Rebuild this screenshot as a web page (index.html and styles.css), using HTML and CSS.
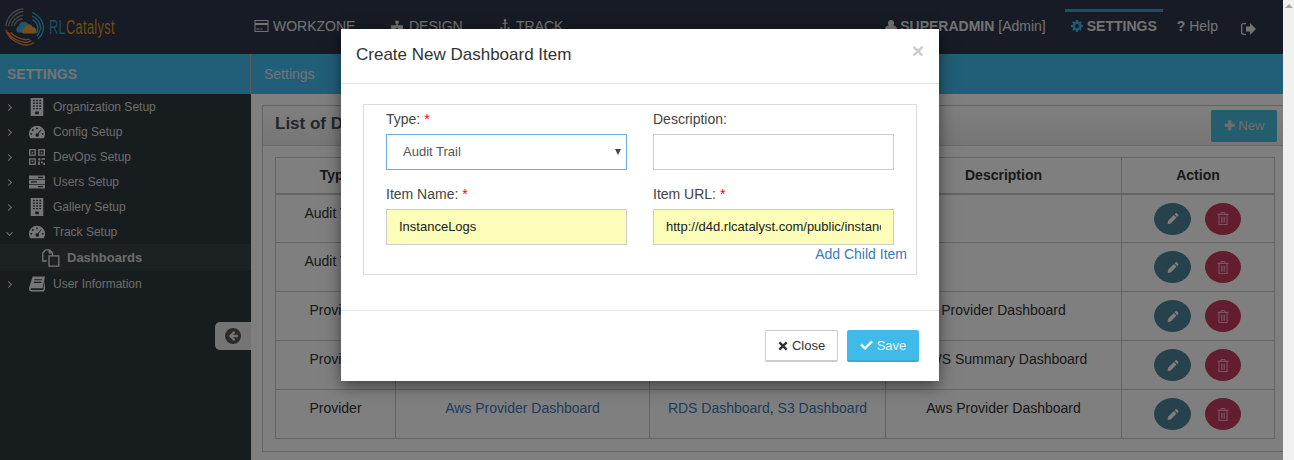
FILE: index.html
```html
<!DOCTYPE html>
<html lang="en">

<head>
    <meta charset="UTF-8">
    <title>RLCatalyst</title>
    <link rel="stylesheet" href="styles.css">
</head>

<body>
    <svg class="defs" width="0" height="0">
        <symbol id="i-building" viewBox="0 0 16 20">
            <path fill="currentColor" fill-rule="evenodd" d="M1 0h14v20H1zM3.500 2v1.600h2V2zm3.500 0v1.600h2V2zm3.500 0v1.600h2V2zM3.500 5v1.600h2V5zM7 5v1.600h2V5zm3.500 0v1.600h2V5zM3.500 8v1.600h2V8zM7 8v1.600h2V8zm3.500 0v1.600h2V8zM3.500 11v1.600h2V11zM7 11v1.600h2V11zm3.500 0v1.600h2V11zM6 15v3h4v-3z" />
        </symbol>
        <symbol id="i-gauge" viewBox="0 0 18 14">
            <path fill="currentColor" fill-rule="evenodd" d="M9 0a9 9 0 0 1 9 9c0 2-.6 3.600-1.600 5H1.600C.6 12.600 0 11 0 9a9 9 0 0 1 9-9zM9 1.800a1.100 1.100 0 1 0 0 2.200 1.100 1.100 0 0 0 0-2.200zM4.300 3.700a1.100 1.100 0 1 0 0 2.200 1.100 1.100 0 0 0 0-2.200zM2.600 8a1.100 1.100 0 1 0 0 2.200 1.100 1.100 0 0 0 0-2.200zM15.400 8a1.100 1.100 0 1 0 0 2.200 1.100 1.100 0 0 0 0-2.200zM13.500 3.800L9.700 8.600a1.900 1.900 0 1 0 1 .7l3.600-5z" />
        </symbol>
        <symbol id="i-qr" viewBox="0 0 14 14">
            <path fill="currentColor" fill-rule="evenodd" d="M0 0h6v6H0zm1.200 1.200v3.600h3.600V1.200zM8 0h6v6H8zm1.200 1.200v3.600h3.600V1.200zM0 8h6v6H0zm1.200 1.200v3.600h3.600V9.200zM2.300 2.300h1.400v1.400H2.300zm8 0h1.400v1.400h-1.400zm-8 8h1.400v1.400H2.300zM8 8h2v2H8zm3 0h3v1.500h-3zM8 11h1.500v3H8zm2.500 0H12v1.500h-1.500zm2 1H14v2h-1.500z" />
        </symbol>
        <symbol id="i-server" viewBox="0 0 16 13">
            <path fill="currentColor" fill-rule="evenodd" d="M0 0h16v3.800H0zm9 1.200v1.300h5V1.200zM0 4.600h16v3.800H0zm2 1.200v1.300h6V5.800zM0 9.200h16V13H0zm9 1.200v1.300h5v-1.300z" />
        </symbol>
        <symbol id="i-book" viewBox="0 0 15 14">
            <path fill="currentColor" fill-rule="evenodd" d="M3.500 0H15l-2.200 11H2.500c-.8 0-1 .4-1 .8s.3.800 1 .8h10.800L15 4.500V12l-1 2H2.200C.9 14 0 13 0 11.700 0 11 .2 10 .4 9.300zM5 2.600v1h7v-1zM4.600 5v1h7V5z" />
        </symbol>
        <symbol id="i-files" viewBox="0 0 18 18">
            <path fill="none" stroke="currentColor" stroke-width="1.300" d="M3.500.8h4l3 3v3M3.500.8L.8 4v8h4M7 6.800h5l4.800 0v10.400H7zM7.300.8v3h3" />
        </symbol>
        <symbol id="i-pencil" viewBox="0 0 12 12">
            <path fill="currentColor" d="M8.600.8a.8.800 0 0 1 1.100 0l1.500 1.500a.8.800 0 0 1 0 1.100l-1 1L7.600 1.800zM6.900 2.500l2.600 2.600-5.800 5.800L.6 11.400l.5-3.100z" />
        </symbol>
        <symbol id="i-trash" viewBox="0 0 12 14">
            <path fill="currentColor" fill-rule="evenodd" d="M4 0h4l1 2h3v1.200h-1V14H1V3.200H0V2h3zm.6 1L4.200 2h3.600l-.4-1zM2.200 3.200v9.600h7.600V3.200zM3.800 5h1v6.500h-1zm1.700 0h1v6.500h-1zm1.700 0h1v6.500h-1z" />
        </symbol>
    </svg>

    <div class="page">
        <div class="app">
            <header class="topbar">
                <div class="logo">
                    <svg class="logo-mark" viewBox="0 0 46 42" width="42" height="40">
                        <g fill="none" stroke-width="1.500">
                            <path stroke="#8a8a8a" d="M1 20C2 10 10 2 20 1M4 20C5 12 12 5 20 4M7 20c1-6 6-11 13-12M10 20c1-4 4-7 9-8" />
                            <path stroke="#3fa9d8" d="M30 5c8 4 13 11 12 19-1 4-3 8-6 10M30 9c6 3 9 8 9 14-1 3-2 6-4 8M30 13c4 2 6 6 6 10 0 2-1 4-2 5" />
                            <path stroke="#e8873a" d="M1 24c2 8 10 15 22 17 3 0 6-1 9-3M3 27c4 6 11 10 20 11 2 0 4-1 6-2M6 27c4 4 10 7 17 8 1 0 3 0 4-1" />
                        </g>
                        <path fill="#3fa9d8" d="M14 27a4 4 0 0 1 1-7 6 6 0 0 1 11-2 5 5 0 0 1 3 9z" />
                        <path fill="#e8a03a" d="M20 28a3.500 3.500 0 0 1 1-6 5 5 0 0 1 9-1 4 4 0 0 1 3 7z" />
                    </svg>
                    <span class="logo-text"><span class="logo-rl">RL</span>Catalyst</span>
                </div>
                <nav class="nav-main">
                    <a class="nav-link nav-workzone">
                        <svg class="nav-icon" viewBox="0 0 14 12" width="15" height="12"><path fill="currentColor" fill-rule="evenodd" d="M0 0h14v12H0zm1 1v2h12V1zm0 4v6h12V5zm1 3.500h3v1H2zm4 0h2v1H6z" /></svg>
                        <span>WORKZONE</span>
                    </a>
                    <a class="nav-link nav-design">
                        <svg class="nav-icon" viewBox="0 0 14 12" width="12" height="12"><path fill="currentColor" d="M5 0h4v3H8v2h6v7H8V8H6v4H0V5h6V3H5z" /></svg>
                        <span>DESIGN</span>
                    </a>
                    <a class="nav-link nav-track">
                        <svg class="nav-icon" viewBox="0 0 10 14" width="10" height="13"><path fill="currentColor" d="M5 0a1.500 1.500 0 0 1 .7 2.800V4H8v1.200H5.700v6.300c1.200-.2 2-.8 2.500-1.500L7 9.500 10 8.500V12L9 11c-.8 1.500-2.300 3-4 3s-3.200-1.500-4-3l-1 1V8.500l3 1-1.200.5c.5.700 1.300 1.300 2.500 1.500V5.200H2V4h2.300V2.800A1.500 1.500 0 0 1 5 0z" /></svg>
                        <span>TRACK</span>
                    </a>
                </nav>
                <div class="nav-user">
                    <a class="nav-link nav-admin">
                        <svg class="nav-icon" viewBox="0 0 12 12" width="12" height="12"><path fill="currentColor" d="M6 0a3 3 0 0 1 2 5.300c2 .4 4 1.400 4 3.700v3H0V9c0-2.300 2-3.300 4-3.700A3 3 0 0 1 6 0z" /></svg>
                        <span><b>SUPERADMIN</b> [Admin]</span>
                    </a>
                    <a class="nav-link nav-settings">
                        <svg class="nav-gear" viewBox="0 0 12 12" width="12" height="12"><path fill="currentColor" fill-rule="evenodd" d="M5 0h2l.3 1.600 1.100.5L9.800 1.200l1 1-.9 1.400.5 1.100L12 5v2l-1.600.3-.5 1.100.9 1.400-1 1-1.400-.9-1.100.5L7 12H5l-.3-1.600-1.100-.5-1.400.9-1-1 .9-1.400-.5-1.100L0 7V5l1.600-.3.5-1.100-.9-1.400 1-1 1.400.9 1.100-.5zM6 4a2 2 0 1 0 0 4 2 2 0 0 0 0-4z" /></svg>
                        <b>SETTINGS</b>
                    </a>
                    <a class="nav-link nav-help"><span><b>?</b> Help</span></a>
                    <a class="nav-link nav-out">
                        <svg viewBox="0 0 15 12" width="15" height="12"><path fill="currentColor" d="M9 0l6 6-6 6V8.500H5v-5h4zM0 2.500A2.500 2.500 0 0 1 2.500 0H5v1.300H2.500c-.7 0-1.200.5-1.200 1.200v7c0 .7.500 1.200 1.200 1.200H5V12H2.500A2.500 2.500 0 0 1 0 9.500z" /></svg>
                    </a>
                </div>
            </header>

            <div class="subbar">
                <div class="subbar-title">SETTINGS</div>
                <div class="subbar-crumb">Settings</div>
            </div>

            <div class="main">
                <aside class="sidebar">
                    <ul class="side-menu">
                        <li class="side-item"><span class="chev"></span><svg class="side-icon side-tall"><use href="#i-building" /></svg>Organization Setup</li>
                        <li class="side-item"><span class="chev"></span><svg class="side-icon"><use href="#i-gauge" /></svg>Config Setup</li>
                        <li class="side-item"><span class="chev"></span><svg class="side-icon"><use href="#i-qr" /></svg>DevOps Setup</li>
                        <li class="side-item"><span class="chev"></span><svg class="side-icon"><use href="#i-server" /></svg>Users Setup</li>
                        <li class="side-item"><span class="chev"></span><svg class="side-icon side-tall"><use href="#i-building" /></svg>Gallery Setup</li>
                        <li class="side-item"><span class="chev chev-open"></span><svg class="side-icon"><use href="#i-gauge" /></svg>Track Setup</li>
                        <li class="side-sub"><svg class="sub-icon"><use href="#i-files" /></svg>Dashboards</li>
                        <li class="side-item"><span class="chev"></span><svg class="side-icon"><use href="#i-book" /></svg>User Information</li>
                    </ul>
                    <div class="side-toggle">
                        <svg viewBox="0 0 16 16" width="16" height="16"><path fill="currentColor" fill-rule="evenodd" d="M8 0a8 8 0 1 1 0 16A8 8 0 0 1 8 0zm.8 3L3.800 8l5 5 1.600-1.600L8.200 9.200H13V6.800H8.200l2.200-2.200z" /></svg>
                    </div>
                </aside>

                <section class="content">
                    <div class="panel">
                        <div class="panel-head">
                            <h2 class="panel-title">List of Dashboard Items</h2>
                            <a class="btn-new"><b>&#10010;</b> New</a>
                        </div>
                        <div class="panel-body">
                            <table class="grid">
                                <colgroup>
                                    <col class="col-type">
                                    <col class="col-item">
                                    <col class="col-child">
                                    <col class="col-desc">
                                    <col class="col-action">
                                </colgroup>
                                <thead>
                                    <tr>
                                        <th>Type</th>
                                        <th>Item Name</th>
                                        <th>Child Items</th>
                                        <th>Description</th>
                                        <th>Action</th>
                                    </tr>
                                </thead>
                                <tbody>
                                    <tr>
                                        <td>Audit Trail</td>
                                        <td><a>InstanceLogs</a></td>
                                        <td></td>
                                        <td></td>
                                        <td class="actions"><a class="act act-edit"><svg><use href="#i-pencil" /></svg></a><a class="act act-del"><svg><use href="#i-trash" /></svg></a></td>
                                    </tr>
                                    <tr>
                                        <td>Audit Trail</td>
                                        <td><a>Audit Logs</a></td>
                                        <td></td>
                                        <td></td>
                                        <td class="actions"><a class="act act-edit"><svg><use href="#i-pencil" /></svg></a><a class="act act-del"><svg><use href="#i-trash" /></svg></a></td>
                                    </tr>
                                    <tr>
                                        <td>Provider</td>
                                        <td><a>Azure Provider Dashboard</a></td>
                                        <td></td>
                                        <td>Provider Dashboard</td>
                                        <td class="actions"><a class="act act-edit"><svg><use href="#i-pencil" /></svg></a><a class="act act-del"><svg><use href="#i-trash" /></svg></a></td>
                                    </tr>
                                    <tr>
                                        <td>Provider</td>
                                        <td><a>AWS Summary Dashboard</a></td>
                                        <td></td>
                                        <td>AWS Summary Dashboard</td>
                                        <td class="actions"><a class="act act-edit"><svg><use href="#i-pencil" /></svg></a><a class="act act-del"><svg><use href="#i-trash" /></svg></a></td>
                                    </tr>
                                    <tr>
                                        <td>Provider</td>
                                        <td><a>Aws Provider Dashboard</a></td>
                                        <td><a>RDS Dashboard</a>, <a>S3 Dashboard</a></td>
                                        <td>Aws Provider Dashboard</td>
                                        <td class="actions"><a class="act act-edit"><svg><use href="#i-pencil" /></svg></a><a class="act act-del"><svg><use href="#i-trash" /></svg></a></td>
                                    </tr>
                                </tbody>
                            </table>
                        </div>
                    </div>
                </section>
            </div>

            <div class="overlay">
                <div class="modal">
                    <div class="modal-head">
                        <h3 class="modal-title">Create New Dashboard Item</h3>
                        <span class="modal-x">&times;</span>
                    </div>
                    <div class="modal-body">
                        <div class="form-box">
                            <div class="form-grid">
                                <div class="field">
                                    <label>Type: <span class="req">*</span></label>
                                    <div class="select-wrap">
                                        <select class="ctl ctl-focus">
                                            <option>Audit Trail</option>
                                        </select>
                                    </div>
                                </div>
                                <div class="field">
                                    <label>Description:</label>
                                    <input class="ctl" type="text">
                                </div>
                                <div class="field">
                                    <label>Item Name: <span class="req">*</span></label>
                                    <input class="ctl ctl-fill" type="text" value="InstanceLogs">
                                </div>
                                <div class="field">
                                    <label>Item URL: <span class="req">*</span></label>
                                    <input class="ctl ctl-fill" type="text" value="http://d4d.rlcatalyst.com/public/instanceLogs.html">
                                </div>
                            </div>
                            <a class="add-child">Add Child Item</a>
                        </div>
                    </div>
                    <div class="modal-foot">
                        <a class="btn btn-close"><svg viewBox="0 0 10 10" width="10" height="10"><path fill="currentColor" d="M2.200.5L5 3.300 7.800.5l1.700 1.700L6.700 5l2.800 2.800-1.700 1.700L5 6.700 2.200 9.500.5 7.800 3.300 5 .5 2.200z" /></svg>Close</a>
                        <a class="btn btn-save"><svg viewBox="0 0 13 10" width="13" height="10"><path fill="currentColor" d="M1.800 3.500L5 6.700 11.200.5 13 2.300 5 10 0 5.300z" /></svg>Save</a>
                    </div>
                </div>
            </div>
        </div>

        <div class="scrollbar"><span class="scroll-up"></span></div>
    </div>
</body>

</html>
```

FILE: styles.css
```css
* {
    margin: 0;
    padding: 0;
    box-sizing: border-box;
}

html,
body {
    height: 460px;
    overflow: hidden;
}

body {
    font-family: "Liberation Sans", Arial, sans-serif;
    font-size: 14px;
    color: #333;
}

.defs {
    display: block;
    height: 0;
}

.page {
    display: flex;
    height: 460px;
}

.app {
    position: relative;
    width: 1283px;
    height: 460px;
    overflow: hidden;
    background: #fff;
}

.scrollbar {
    width: 11px;
    background: #f1f1f1;
}

.scroll-up {
    display: block;
    margin: 4px auto 0;
    width: 0;
    border-left: 4px solid transparent;
    border-right: 4px solid transparent;
    border-bottom: 4px solid #a8a8a8;
}

/* top bar */
.topbar {
    display: flex;
    height: 54px;
    background: #2c364a;
    color: #e6e6e6;
}

.logo {
    display: flex;
    align-items: center;
    width: 251px;
    padding-left: 5px;
}

.logo-text {
    display: inline-block;
    margin-left: 2px;
    font-size: 20px;
    letter-spacing: .5px;
    color: #df9a2a;
    transform: scaleX(.64);
    transform-origin: left center;
}

.logo-rl {
    color: #3a9cc4;
}

.nav-link {
    display: flex;
    align-items: center;
    gap: 4px;
    height: 54px;
    padding-bottom: 3px;
}

.nav-main {
    display: flex;
    padding-left: 3px;
}

.nav-workzone {
    width: 137px;
}

.nav-design {
    gap: 6px;
    width: 109px;
}

.nav-track {
    gap: 6px;
}

.nav-user {
    display: flex;
    margin-left: auto;
    padding-right: 27px;
}

.nav-admin {
    gap: 3px;
    margin-right: 19px;
}

.nav-settings {
    position: relative;
    padding: 0 6px 3px;
    margin-right: 14px;
}

.nav-settings::before {
    content: "";
    position: absolute;
    top: 9px;
    left: 0;
    right: 0;
    height: 3px;
    background: #3ea3c9;
}

.nav-gear {
    color: #40b4e5;
}

.nav-help {
    margin-right: 23px;
}

.nav-out {
    padding-top: 6px;
}

/* blue strip */
.subbar {
    display: flex;
    height: 40px;
    background: #42bdf0;
    color: #e8e8e8;
    line-height: 40px;
}

.subbar-title {
    width: 251px;
    padding-left: 7px;
    font-weight: bold;
    border-right: 1px solid #b8b8b8;
}

.subbar-crumb {
    padding-left: 13px;
}

/* sidebar + content */
.main {
    display: flex;
    height: 366px;
}

.sidebar {
    position: relative;
    width: 251px;
    flex: none;
    background: #2f3a3e;
    color: #d8d8d8;
    font-size: 12px;
}

.side-menu {
    list-style: none;
}

.side-item {
    display: flex;
    align-items: center;
    height: 25px;
    padding: 1px 0 0 6px;
}

.chev {
    width: 5px;
    height: 5px;
    margin-right: 18px;
    border-top: 1px solid #d8d8d8;
    border-right: 1px solid #d8d8d8;
    transform: rotate(45deg);
}

.chev-open {
    transform: rotate(135deg);
    margin-left: 1px;
    margin-right: 17px;
}

.side-icon {
    width: 16px;
    height: 16px;
    margin-right: 8px;
    color: #e8eef2;
}

.side-tall {
    height: 18px;
}

.side-sub {
    display: flex;
    align-items: center;
    height: 27px;
    padding-left: 42px;
    background: #394347;
    font-size: 13px;
    font-weight: bold;
}

.sub-icon {
    width: 18px;
    height: 18px;
    margin-right: 7px;
    color: #e8eef2;
}

.side-toggle {
    position: absolute;
    right: 0;
    top: 228px;
    display: flex;
    align-items: center;
    width: 36px;
    height: 28px;
    padding-left: 10px;
    background: #e8e8e8;
    color: #555;
    border-radius: 5px 0 0 5px;
}

.content {
    flex: 1;
    padding: 11px 0 0 11px;
    background: #fff;
}

.panel {
    height: 347px;
    border: 1px solid #c8c8c8;
    border-right: 0;
}

.panel-head {
    display: flex;
    align-items: center;
    justify-content: space-between;
    height: 40px;
    padding: 0 6px 0 12px;
    background: linear-gradient(to bottom, #fff, #ececec);
    border-bottom: 1px solid #d4d4d4;
}

.panel-title {
    padding-bottom: 4px;
    font-size: 17px;
    font-weight: bold;
    color: #444e5a;
}

.btn-new {
    width: 66px;
    height: 32px;
    margin-top: 1px;
    line-height: 32px;
    text-align: center;
    font-size: 13px;
    color: #ddd;
    background: #46bbdc;
    border-radius: 2px;
}

.panel-body {
    padding: 11px 0 0 12px;
}

.grid {
    width: 999px;
    border-collapse: collapse;
    table-layout: fixed;
    text-align: center;
}

.col-type {
    width: 120px;
}

.col-item {
    width: 254px;
}

.col-child {
    width: 236px;
}

.col-desc {
    width: 236px;
}

.col-action {
    width: 153px;
}

.grid th {
    height: 36px;
    font-weight: bold;
    color: #333;
    border: 1px solid #c8c8c8;
    border-bottom-width: 2px;
}

.grid td {
    height: 49px;
    padding-top: 10px;
    vertical-align: top;
    border: 1px solid #c8c8c8;
}

.grid a {
    color: #3a7ab8;
}

.grid .actions {
    padding: 8px 0 0 32px;
    text-align: left;
}

.act {
    display: inline-flex;
    align-items: center;
    justify-content: center;
    height: 32px;
    border-radius: 50%;
    vertical-align: top;
}

.act svg {
    width: 12px;
    height: 13px;
}

.grid .act-edit {
    width: 37px;
    background: #4f8599;
    color: #fff;
}

.grid .act-del {
    width: 36px;
    margin-left: 14px;
    background: #c53a5c;
    color: #f3a6ba;
}

/* dialog */
.overlay {
    position: absolute;
    top: 0;
    left: 0;
    width: 1283px;
    height: 460px;
    padding: 29px 3px 0 0;
    background: rgba(0, 0, 0, .5);
}

.modal {
    width: 598px;
    height: 352px;
    margin: 0 auto;
    background: #fff;
    box-shadow: 0 5px 15px rgba(0, 0, 0, .5);
}

.modal-head {
    display: flex;
    justify-content: space-between;
    height: 55px;
    padding: 15px 15px 0;
    border-bottom: 1px solid #e5e5e5;
}

.modal-title {
    font-size: 17px;
    font-weight: normal;
    line-height: 22px;
    color: #333;
}

.modal-x {
    margin-top: -5px;
    font-size: 21px;
    font-weight: bold;
    line-height: 24px;
    color: #ccc;
}

.modal-body {
    height: 227px;
    padding: 20px 22px 0;
    border-bottom: 1px solid #e5e5e5;
}

.form-box {
    height: 171px;
    padding: 5px 9px 0 22px;
    border: 1px solid #ddd;
}

.form-grid {
    display: grid;
    grid-template-columns: 241px 241px;
    column-gap: 26px;
    row-gap: 15px;
}

.field label {
    display: block;
    height: 24px;
    line-height: 18px;
    color: #444;
}

.req {
    color: #f00;
}

.select-wrap {
    position: relative;
}

.select-wrap::after {
    content: "";
    position: absolute;
    top: 15px;
    right: 6px;
    border-left: 3.500px solid transparent;
    border-right: 3.500px solid transparent;
    border-top: 6px solid #444;
}

.ctl {
    display: block;
    width: 241px;
    height: 36px;
    border: 1px solid #ccc;
    background: #fff;
    font-family: "Liberation Sans", Arial, sans-serif;
    font-size: 13px;
    color: #222;
    padding: 0 12px 2px;
    border-radius: 0;
    outline: 0;
}

.ctl-focus {
    appearance: none;
    padding: 0 0 2px 16px;
    border-color: #66afe9;
    color: #555;
}

.ctl-fill {
    background: #fbfdb8;
}

.add-child {
    display: block;
    margin-top: 1px;
    text-align: right;
    color: #3a7ab8;
}

.modal-foot {
    display: flex;
    justify-content: flex-end;
    gap: 9px;
    padding: 19px 20px 0 0;
}

.btn {
    display: flex;
    align-items: center;
    justify-content: center;
    gap: 4px;
    height: 32px;
    font-size: 13px;
    border-radius: 2px;
}

.btn-close {
    width: 73px;
    color: #333;
    background: #fff;
    border: 1px solid #ccc;
    border-bottom-width: 2px;
}

.btn-save {
    width: 72px;
    color: #eaf7fc;
    background: #40bae8;
    border-bottom: 2px solid #38abd6;
}
```
